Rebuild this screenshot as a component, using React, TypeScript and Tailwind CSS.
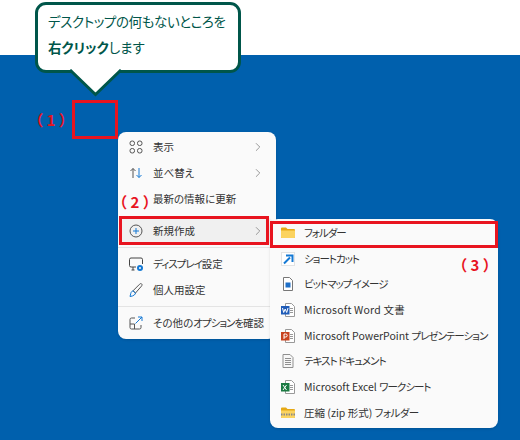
import React from "react";
import { ChevronRight } from "lucide-react";

const font = { fontFamily: '"Noto Sans CJK JP", "Noto Sans", sans-serif' };

const Grid = () => (
  <svg width="16" height="16" viewBox="0 0 16 16" fill="none" stroke="#555" strokeWidth="1">
    <rect x="2" y="2" width="4.5" height="4.5" rx="2" />
    <rect x="9.5" y="2" width="4.5" height="4.5" rx="2" />
    <rect x="2" y="9.5" width="4.5" height="4.5" rx="2" />
    <rect x="9.5" y="9.5" width="4.5" height="4.5" rx="2" />
  </svg>
);

const Sort = () => (
  <svg width="16" height="16" viewBox="0 0 16 16" fill="none" strokeWidth="1">
    <path d="M5 13V3.500M2.500 6l2.500-2.500L7.500 6" stroke="#555" />
    <path d="M11 3v9.500M8.500 10l2.500 2.500 2.500-2.500" stroke="#1479d4" />
  </svg>
);

const Plus = () => (
  <svg width="16" height="16" viewBox="0 0 16 16" fill="none" strokeWidth="1">
    <circle cx="8" cy="8" r="6" stroke="#555" />
    <path d="M8 5v6M5 8h6" stroke="#1479d4" />
  </svg>
);

const Display = () => (
  <svg width="16" height="16" viewBox="0 0 16 16" fill="none">
    <path d="M8 11H3a1.500 1.500 0 0 1-1.500-1.500v-6A1.500 1.500 0 0 1 3 2h10a1.500 1.500 0 0 1 1.500 1.500V8" stroke="#444" />
    <path d="M3.500 14h3M5 11v3" stroke="#444" />
    <circle cx="12" cy="12" r="3" fill="#1479d4" />
    <circle cx="12" cy="12" r="1" fill="#fafafa" />
  </svg>
);

const Brush = () => (
  <svg width="16" height="16" viewBox="0 0 16 16" fill="none">
    <path d="M13.500 1.800c.8.600.6 1.500 0 2.300L7.500 11 5 8.800l6.500-6.500c.7-.7 1.400-1 2-.5z" stroke="#555" />
    <path d="M5 8.800c-1.500.5-2 1.500-2.300 3L2 14.500c1.800-.2 3.300-.7 4.300-1.500.8-.7 1-1.300 1.200-2z" stroke="#1479d4" />
  </svg>
);

const More = () => (
  <svg width="16" height="16" viewBox="0 0 16 16" fill="none">
    <path d="M7 3H3.500A1.500 1.500 0 0 0 2 4.500v8A1.500 1.500 0 0 0 3.500 14h8a1.500 1.500 0 0 0 1.500-1.500V10" stroke="#555" />
    <path d="M2 9h4.500v5" stroke="#555" />
    <path d="M7.500 8.500L14 2M10 2h4v4" stroke="#1479d4" />
  </svg>
);

const Folder = () => (
  <svg width="16" height="16" viewBox="0 0 16 16">
    <path d="M1 3.500A1 1 0 0 1 2 2.500h4l1.500 1.500H14a1 1 0 0 1 1 1v7a1 1 0 0 1-1 1H2a1 1 0 0 1-1-1z" fill="#e6a915" />
    <path d="M1 5.500h14v6.500a1 1 0 0 1-1 1H2a1 1 0 0 1-1-1z" fill="#fbd35f" />
  </svg>
);

const Shortcut = () => (
  <svg width="16" height="16" viewBox="0 0 16 16">
    <rect x="1.500" y="1.500" width="13" height="13" fill="#fff" stroke="#e3e3e3" />
    <path d="M4 12.500L10 6.500M6 4.500h6.500V11" fill="none" stroke="#1479d4" strokeWidth="2" />
  </svg>
);

const Bitmap = () => (
  <svg width="16" height="16" viewBox="0 0 16 16">
    <path d="M3.500 1.500h6l3 3v10h-9z" fill="#fff" stroke="#777" />
    <rect x="5.500" y="6.500" width="5" height="5" fill="#1f6fc7" />
  </svg>
);

const DocBase = ({ color, letter }: { color: string; letter: string }) => (
  <svg width="16" height="16" viewBox="0 0 16 16">
    <path d="M5.500 1.500h6l3 3v10h-9z" fill="#fff" stroke="#999" />
    <path d="M10 6.500h3M10 8.500h3M10 10.500h3" stroke="#999" />
    <rect x="1" y="4" width="8.500" height="8.500" fill={color} />
    <path d={letter} fill="none" stroke="#fff" strokeWidth="1" />
  </svg>
);

const TextDoc = () => (
  <svg width="16" height="16" viewBox="0 0 16 16">
    <path d="M3 1.500h7l3 3v10H3z" fill="#f7f7f7" stroke="#8f8f8f" />
    <path d="M5 5.500h6M5 7.500h6M5 9.500h6M5 11.500h6" stroke="#8f8f8f" />
  </svg>
);

const ZipFolder = () => (
  <svg width="16" height="16" viewBox="0 0 16 16">
    <path d="M1 3.500A1 1 0 0 1 2 2.500h4l1.500 1.500H14a1 1 0 0 1 1 1v7a1 1 0 0 1-1 1H2a1 1 0 0 1-1-1z" fill="#e6a915" />
    <path d="M1 5.500h14v6.500a1 1 0 0 1-1 1H2a1 1 0 0 1-1-1z" fill="#fbd35f" />
    <path d="M1 9.500h14" stroke="#8a8a8a" strokeWidth="2" strokeDasharray="1.500 1" />
  </svg>
);

// kana runs are narrower than Noto's in the screenshot
const K = ({ children }: { children: React.ReactNode }) => <span className="tracking-[-1px]">{children}</span>;

const Row = ({ icon, label, arrow, active }: { icon: React.ReactNode; label: React.ReactNode; arrow?: boolean; active?: boolean }) => (
  <div className={`mx-1 flex h-[26px] items-center pl-[6px] pr-[7px] rounded ${active ? "bg-[#f0f0f0]" : ""}`}>
    <span className="flex w-[16px] shrink-0 items-center justify-center">{icon}</span>
    <span className="ml-[9px] flex-1 whitespace-nowrap text-[10.5px] text-[#333]">{label}</span>
    {arrow && <ChevronRight className="h-[14px] w-[14px] text-[#777]" strokeWidth={1.25} />}
  </div>
);

const SubRow = ({ icon, label }: { icon: React.ReactNode; label: React.ReactNode }) => (
  <div className="flex h-[25.7px] items-center pl-[10px]">
    <span className="flex w-[16px] shrink-0 items-center justify-center">{icon}</span>
    <span className="ml-[8px] whitespace-nowrap text-[10.5px] text-[#333]">{label}</span>
  </div>
);

const Note = ({ children, className }: { children: React.ReactNode; className: string }) => (
  <span className={`absolute text-[15px] leading-none font-bold tracking-[4px] text-[#e8141f] ${className}`}>{children}</span>
);

export default function App() {
  return (
    <div className='relative h-[440px] w-[520px] overflow-hidden bg-white [font-feature-settings:"palt"]' style={font}>
      <div className="mt-[55px] h-[385px] bg-[#0060ad]" />

      {/* callout */}
      <div className="absolute left-[35px] top-[2px] h-[71px] w-[206px] rounded-[11px] border-[3px] border-[#00564a] bg-white pl-[10px] pt-[3px] text-[13.5px] leading-[26px] text-[#00564a]">
        <p className="whitespace-nowrap tracking-[-0.4px]">デスクトップの何もないところを</p>
        <p className="whitespace-nowrap"><span className="font-bold">右クリック</span>します</p>
      </div>
      <svg className="absolute left-[68px] top-[69px]" width="56" height="28" viewBox="0 0 56 28">
        <path d="M2 1L27.500 25.500 53 1" fill="#fff" stroke="#00564a" strokeWidth="3" />
      </svg>

      <div className="absolute left-[72px] top-[100px] h-[39px] w-[46px] border-[3px] border-[#e8141f]" />
      <Note className="left-[35px] top-[112px]">（1）</Note>

      {/* context menu */}
      <div className="absolute left-[118px] top-[132px] h-[207px] w-[158px] rounded-lg bg-[#fafafa] pt-[2px] shadow-sm">
        <Row icon={<Grid />} label="表示" arrow />
        <Row icon={<Sort />} label="並べ替え" arrow />
        <Row icon={<span className="block w-4" />} label="最新の情報に更新" />
        <div className="h-[6px]" />
        <Row icon={<Plus />} label="新規作成" arrow active />
        <div className="my-[3px] border-t border-[#e4e4e4]" />
        <Row icon={<Display />} label={<><K>ディスプレイ</K>設定</>} />
        <Row icon={<Brush />} label="個人用設定" />
        <div className="my-[3px] border-t border-[#e4e4e4]" />
        <Row icon={<More />} label={<>その他の<K>オプションを</K>確認</>} />
      </div>

      {/* submenu */}
      <div className="absolute left-[270px] top-[219px] h-[209px] w-[228px] rounded-lg bg-[#fafafa] pt-[1px] shadow-sm">
        <SubRow icon={<Folder />} label={<K>フォルダー</K>} />
        <SubRow icon={<Shortcut />} label={<K>ショートカット</K>} />
        <SubRow icon={<Bitmap />} label={<K>ビットマップ イメージ</K>} />
        <SubRow icon={<DocBase color="#1f5cb8" letter="M2.500 6l1.200 4.500L5.200 7l1.500 3.500L8 6" />} label={<span className="tracking-[0.2px]">Microsoft Word 文書</span>} />
        <SubRow icon={<DocBase color="#c8421f" letter="M4 11V6h1.700a1.500 1.500 0 0 1 0 3H4" />} label={<>Microsoft PowerPoint <K>プレゼンテーション</K></>} />
        <SubRow icon={<TextDoc />} label={<K>テキスト ドキュメント</K>} />
        <SubRow icon={<DocBase color="#1b7a43" letter="M3 6l3.500 5M6.500 6L3 11" />} label={<>Microsoft Excel <K>ワークシート</K></>} />
        <SubRow icon={<ZipFolder />} label={<>圧縮 (zip 形式) <span className="tracking-[-0.5px]">フォルダー</span></>} />
      </div>

      {/* red highlights */}
      <div className="absolute left-[119px] top-[216px] h-[29px] w-[150px] border-[3px] border-[#e8141f]" />
      <div className="absolute left-[270px] top-[221px] h-[27px] w-[228px] border-[3px] border-[#e8141f]" />
      <Note className="left-[119px] top-[194px]">（2）</Note>
      <Note className="left-[459px] top-[257px]">（3）</Note>
    </div>
  );
}
